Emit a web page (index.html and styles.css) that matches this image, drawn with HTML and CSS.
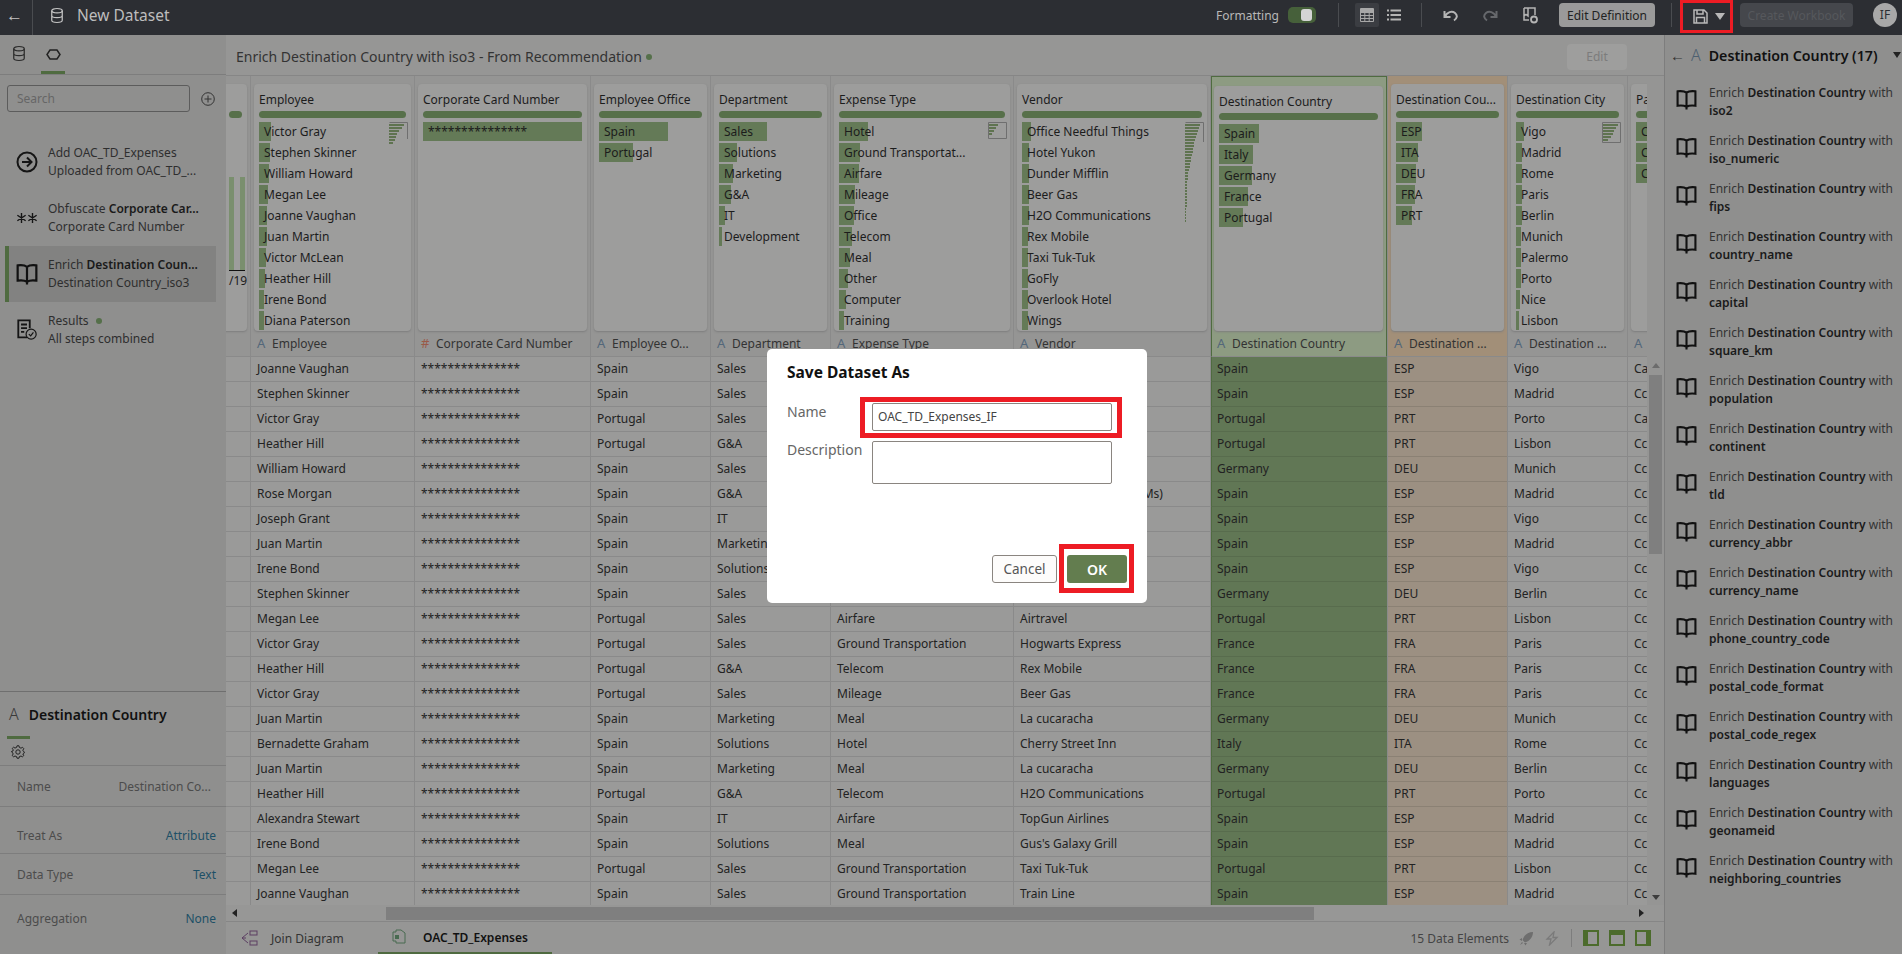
FILE: index.html
```html
<!doctype html>
<html>
<head>
<meta charset="utf-8">
<title>New Dataset</title>
<link rel="stylesheet" href="styles.css">
</head>
<body>
<svg class="defs" width="0" height="0">
	<symbol id="book" viewBox="0 0 20 20"><path d="M10 3.5C8 2 4.5 1.8 1.5 2.2V16C4.5 15.6 8 15.8 10 17M10 3.5C12 2 15.5 1.8 18.5 2.2V16C15.5 15.6 12 15.8 10 17M10 3.5V19.5" fill="none" stroke="currentColor" stroke-width="2"/></symbol>
	<symbol id="db" viewBox="0 0 16 18"><ellipse cx="8" cy="3.5" rx="6" ry="2.5" fill="none" stroke="currentColor" stroke-width="1.4"/><path d="M2 3.5V14.5C2 16 4.7 17 8 17S14 16 14 14.5V3.5M2 9C2 10.5 4.7 11.5 8 11.5S14 10.5 14 9" fill="none" stroke="currentColor" stroke-width="1.4"/></symbol>
</svg>

<div class="topbar">
	<div class="back">&#8592;</div>
	<svg class="top-db"><use href="#db"/></svg>
	<div class="top-title">New Dataset</div>
	<div class="top-right">
		<span class="fmt">Formatting</span>
		<span class="toggle"><i></i></span>
		<span class="sep sep1"></span>
		<span class="view-btn">
			<svg width="14" height="14" viewBox="0 0 14 14"><path d="M.5.5H13.5V13.5H.5ZM.5 4.5H13.5M.5 7.5H13.5M.5 10.5H13.5M4.8 4.5V13.5M9.2 4.5V13.5" fill="none" stroke="#a8a8a8"/><rect x="1" y="1" width="12" height="3" fill="#a8a8a8"/></svg>
		</span>
		<svg class="list-ico" width="14" height="12" viewBox="0 0 14 12"><path d="M0 1.5H2M3.5 1.5H14M0 6H2M3.5 6H14M0 10.5H2M3.5 10.5H14" stroke="#b4b4b4" stroke-width="2"/></svg>
		<span class="sep sep2"></span>
		<svg class="undo" width="15" height="14" viewBox="0 0 15 14"><path d="M1.5 3V9H7.5M2 8.5C4 4 9 2.5 12 5S14 10.500 11 12.500" fill="none" stroke="#b4b4b4" stroke-width="2"/></svg>
		<svg class="redo" width="15" height="14" viewBox="0 0 15 14"><path d="M13.500 3V9H7.500M13 8.500C11 4 6 2.500 3 5S1 10.500 4 12.500" fill="none" stroke="#66686c" stroke-width="2"/></svg>
		<svg class="recipe" width="15" height="17" viewBox="0 0 15 17"><path d="M1 1H12V8M1 1V13H6M5 1V9L3 7.500L1 9" fill="none" stroke="#b4b4b4" stroke-width="1.500"/><circle cx="11" cy="12.500" r="3" fill="none" stroke="#b4b4b4" stroke-width="1.800"/></svg>
		<button class="edit-def" type="button">Edit Definition</button>
		<span class="sep sep3"></span>
		<div class="save-box">
			<svg width="15" height="15" viewBox="0 0 15 15"><path d="M1 1H11L14 4V14H1ZM4 1V5H10V1M3.500 14V8.500H11.500V14" fill="none" stroke="#b8b8b8" stroke-width="1.500"/></svg>
			<span class="caret"></span>
		</div>
		<button class="create-wb" type="button">Create Workbook</button>
		<span class="avatar">IF</span>
	</div>
</div>

<div class="main">
	<div class="left">
		<div class="left-tabs">
			<svg class="ltab"><use href="#db"/></svg>
			<span class="ltab-on"><svg width="15" height="11" viewBox="0 0 15 11"><path d="M4 1H11L14 5.500L11 10H4L1 5.500Z" fill="none" stroke="#222" stroke-width="1.500"/></svg></span>
		</div>
		<div class="search-row">
			<div class="search">Search</div>
			<svg width="14" height="14" viewBox="0 0 14 14"><circle cx="7" cy="7" r="6.300" fill="none" stroke="#333"/><path d="M7 3.500V10.500M3.500 7H10.500" stroke="#333"/></svg>
		</div>
		<div class="steps">
			<div class="step">
				<svg class="step-ico" viewBox="0 0 22 22"><circle cx="11" cy="11" r="9.500" fill="none" stroke="#151515" stroke-width="2"/><path d="M6 11H15M11 6.500L15.500 11L11 15.500" fill="none" stroke="#151515" stroke-width="2"/></svg>
				<div class="step-txt"><div>Add OAC_TD_Expenses</div><div>Uploaded from OAC_TD_...</div></div>
			</div>
			<div class="step">
				<svg class="step-ico" viewBox="0 0 24 22"><path d="M6 5.500V16.500M1.500 8L10.500 14M10.500 8L1.500 14M18 5.500V16.500M13.500 8L22.500 14M22.500 8L13.500 14" stroke="#151515" stroke-width="1.500"/></svg>
				<div class="step-txt"><div>Obfuscate <b>Corporate Car...</b></div><div>Corporate Card Number</div></div>
			</div>
			<div class="step sel">
				<svg class="step-ico"><use href="#book"/></svg>
				<div class="step-txt"><div>Enrich <b>Destination Coun...</b></div><div>Destination Country_iso3</div></div>
			</div>
			<div class="step">
				<svg class="step-ico" viewBox="0 0 22 24"><path d="M11 20H1.500V1.500H14V10M4.500 6H11M4.500 10H11M4.500 14H8" fill="none" stroke="#151515" stroke-width="2"/><circle cx="15.500" cy="16.500" r="5.500" fill="none" stroke="#151515" stroke-width="1.300"/><path d="M13 16.500L15 18.500L18 14.500" fill="none" stroke="#151515" stroke-width="1.300"/></svg>
				<div class="step-txt"><div>Results <i class="dot"></i></div><div>All steps combined</div></div>
			</div>
		</div>
		<div class="props">
			<div class="props-head"><span class="a-big">A</span><b>Destination Country</b></div>
			<div class="props-tab"><i></i>
				<svg width="14" height="14" viewBox="0 0 14 14"><circle cx="7" cy="7" r="2.200" fill="none" stroke="#222"/><path d="M6 .8H8L8.400 2.500L10 3.200L11.500 2.300L12.800 3.700L11.800 5.200L12.500 6.500L13.500 7L12.500 8.800L11.800 9L12.800 10.500L11.400 11.800L10 11L8.400 11.600L8 13.200H6L5.600 11.600L4 11L2.600 11.800L1.200 10.500L2.200 9L1.500 7.500L.5 7V6.500L2 6L2.200 4.800L1.200 3.500L2.600 2.200L4 3.100L5.600 2.400Z" fill="none" stroke="#222"/></svg>
			</div>
			<div class="prop h41"><span>Name</span><span class="pv-grey">Destination Co...</span></div>
			<div class="prop h47"><span>Treat As</span><span class="pv">Attribute</span></div>
			<div class="prop h41"><span>Data Type</span><span class="pv">Text</span></div>
			<div class="prop last"><span>Aggregation</span><span class="pv">None</span></div>
		</div>
	</div>

	<div class="center">
		<div class="subhead">
			<span class="subtitle">Enrich Destination Country with iso3 - From Recommendation</span><i class="dot"></i>
			<button class="edit-btn" type="button">Edit</button>
		</div>
		<div class="sheet">
			<div class="cols">
				<div class="col w-date">
					<div class="prof"><div class="card">
						<div class="card-name">&nbsp;</div><div class="qual"></div>
						<div class="mini-bars"><i></i><i></i></div>
						<div class="date-lbl">/19</div>
					</div></div>
					<div class="head"></div>
					<div class="cell"></div><div class="cell"></div><div class="cell"></div><div class="cell"></div><div class="cell"></div><div class="cell"></div><div class="cell"></div><div class="cell"></div><div class="cell"></div><div class="cell"></div><div class="cell"></div><div class="cell"></div><div class="cell"></div><div class="cell"></div><div class="cell"></div><div class="cell"></div><div class="cell"></div><div class="cell"></div><div class="cell"></div><div class="cell"></div><div class="cell"></div><div class="cell"></div>
				</div>

				<div class="col w-emp">
					<div class="prof"><div class="card">
						<div class="card-name">Employee</div><div class="qual"></div>
						<svg class="spark" width="19" height="23" viewBox="0 0 19 23"><path d="M.5.500H18.500V17" fill="none" stroke="#6f6f6f"/><path d="M0 3H15M0 6H13M0 9H10M0 12H8M0 15H7M0 18H6M0 21H4" stroke="#5f7350" stroke-width="2"/></svg>
						<div class="v"><i style="width:12px"></i>Victor Gray</div>
						<div class="v"><i style="width:11px"></i>Stephen Skinner</div>
						<div class="v"><i style="width:10px"></i>William Howard</div>
						<div class="v"><i style="width:9px"></i>Megan Lee</div>
						<div class="v"><i style="width:8px"></i>Joanne Vaughan</div>
						<div class="v"><i style="width:8px"></i>Juan Martin</div>
						<div class="v"><i style="width:7px"></i>Victor McLean</div>
						<div class="v"><i style="width:6px"></i>Heather Hill</div>
						<div class="v"><i style="width:5px"></i>Irene Bond</div>
						<div class="v"><i style="width:5px"></i>Diana Paterson</div>
					</div></div>
					<div class="head"><span class="a">A</span>Employee</div>
					<div class="cell">Joanne Vaughan</div><div class="cell">Stephen Skinner</div><div class="cell">Victor Gray</div><div class="cell">Heather Hill</div><div class="cell">William Howard</div><div class="cell">Rose Morgan</div><div class="cell">Joseph Grant</div><div class="cell">Juan Martin</div><div class="cell">Irene Bond</div><div class="cell">Stephen Skinner</div><div class="cell">Megan Lee</div><div class="cell">Victor Gray</div><div class="cell">Heather Hill</div><div class="cell">Victor Gray</div><div class="cell">Juan Martin</div><div class="cell">Bernadette Graham</div><div class="cell">Juan Martin</div><div class="cell">Heather Hill</div><div class="cell">Alexandra Stewart</div><div class="cell">Irene Bond</div><div class="cell">Megan Lee</div><div class="cell">Joanne Vaughan</div>
				</div>

				<div class="col w-card">
					<div class="prof"><div class="card">
						<div class="card-name">Corporate Card Number</div><div class="qual"></div>
						<div class="v"><i style="width:159px"></i>***************</div>
					</div></div>
					<div class="head"><span class="a num">#</span>Corporate Card Number</div>
					<div class="cell">***************</div><div class="cell">***************</div><div class="cell">***************</div><div class="cell">***************</div><div class="cell">***************</div><div class="cell">***************</div><div class="cell">***************</div><div class="cell">***************</div><div class="cell">***************</div><div class="cell">***************</div><div class="cell">***************</div><div class="cell">***************</div><div class="cell">***************</div><div class="cell">***************</div><div class="cell">***************</div><div class="cell">***************</div><div class="cell">***************</div><div class="cell">***************</div><div class="cell">***************</div><div class="cell">***************</div><div class="cell">***************</div><div class="cell">***************</div>
				</div>

				<div class="col w-office">
					<div class="prof"><div class="card">
						<div class="card-name">Employee Office</div><div class="qual"></div>
						<div class="v"><i style="width:69px"></i>Spain</div>
						<div class="v"><i style="width:34px"></i>Portugal</div>
					</div></div>
					<div class="head"><span class="a">A</span>Employee O...</div>
					<div class="cell">Spain</div><div class="cell">Spain</div><div class="cell">Portugal</div><div class="cell">Portugal</div><div class="cell">Spain</div><div class="cell">Spain</div><div class="cell">Spain</div><div class="cell">Spain</div><div class="cell">Spain</div><div class="cell">Spain</div><div class="cell">Portugal</div><div class="cell">Portugal</div><div class="cell">Portugal</div><div class="cell">Portugal</div><div class="cell">Spain</div><div class="cell">Spain</div><div class="cell">Spain</div><div class="cell">Portugal</div><div class="cell">Spain</div><div class="cell">Spain</div><div class="cell">Portugal</div><div class="cell">Spain</div>
				</div>

				<div class="col w-dept">
					<div class="prof"><div class="card">
						<div class="card-name">Department</div><div class="qual"></div>
						<div class="v"><i style="width:48px"></i>Sales</div>
						<div class="v"><i style="width:18px"></i>Solutions</div>
						<div class="v"><i style="width:14px"></i>Marketing</div>
						<div class="v"><i style="width:12px"></i>G&amp;A</div>
						<div class="v"><i style="width:6px"></i>IT</div>
						<div class="v"><i style="width:3px"></i>Development</div>
					</div></div>
					<div class="head"><span class="a">A</span>Department</div>
					<div class="cell">Sales</div><div class="cell">Sales</div><div class="cell">Sales</div><div class="cell">G&amp;A</div><div class="cell">Sales</div><div class="cell">G&amp;A</div><div class="cell">IT</div><div class="cell">Marketing</div><div class="cell">Solutions</div><div class="cell">Sales</div><div class="cell">Sales</div><div class="cell">Sales</div><div class="cell">G&amp;A</div><div class="cell">Sales</div><div class="cell">Marketing</div><div class="cell">Solutions</div><div class="cell">Marketing</div><div class="cell">G&amp;A</div><div class="cell">IT</div><div class="cell">Solutions</div><div class="cell">Sales</div><div class="cell">Sales</div>
				</div>

				<div class="col w-type">
					<div class="prof"><div class="card">
						<div class="card-name">Expense Type</div><div class="qual"></div>
						<svg class="spark" width="19" height="17" viewBox="0 0 19 17"><path d="M.5.500H18.500V16.500H.5Z" fill="none" stroke="#6f6f6f"/><path d="M1 3H10M1 6H8M1 9H6M1 12H4" stroke="#5f7350" stroke-width="2"/></svg>
						<div class="v"><i style="width:29px"></i>Hotel</div>
						<div class="v"><i style="width:21px"></i>Ground Transportat...</div>
						<div class="v"><i style="width:20px"></i>Airfare</div>
						<div class="v"><i style="width:16px"></i>Mileage</div>
						<div class="v"><i style="width:15px"></i>Office</div>
						<div class="v"><i style="width:13px"></i>Telecom</div>
						<div class="v"><i style="width:11px"></i>Meal</div>
						<div class="v"><i style="width:9px"></i>Other</div>
						<div class="v"><i style="width:7px"></i>Computer</div>
						<div class="v"><i style="width:5px"></i>Training</div>
					</div></div>
					<div class="head"><span class="a">A</span>Expense Type</div>
					<div class="cell">Airfare</div><div class="cell">Hotel</div><div class="cell">Meal</div><div class="cell">Telecom</div><div class="cell">Hotel</div><div class="cell">Office</div><div class="cell">Computer</div><div class="cell">Meal</div><div class="cell">Other</div><div class="cell">Mileage</div><div class="cell">Airfare</div><div class="cell">Ground Transportation</div><div class="cell">Telecom</div><div class="cell">Mileage</div><div class="cell">Meal</div><div class="cell">Hotel</div><div class="cell">Meal</div><div class="cell">Telecom</div><div class="cell">Airfare</div><div class="cell">Meal</div><div class="cell">Ground Transportation</div><div class="cell">Ground Transportation</div>
				</div>

				<div class="col w-vendor">
					<div class="prof"><div class="card">
						<div class="card-name">Vendor</div><div class="qual"></div>
						<svg class="spark tall" width="19" height="102" viewBox="0 0 19 102"><path d="M.5.500H18.500V20" fill="none" stroke="#6f6f6f"/><path d="M0 3H15M0 6H14M0 9H13M0 12H12M0 15H11M0 18H10M0 21H9M0 24H9M0 27H8M0 30H8M0 33H7M0 36H6M0 39H6M0 42H5M0 45H5M0 48H4M0 51H3M0 54H3M0 57H3M0 60H2M0 63H2M0 66H2M0 69H2M0 72H2M0 75H2M0 78H2M0 81H2M0 84H2M0 87H1M0 90H1M0 93H1M0 96H1M0 99H1" stroke="#5f7350" stroke-width="2"/></svg>
						<div class="v"><i style="width:9px"></i>Office Needful Things</div>
						<div class="v"><i style="width:7px"></i>Hotel Yukon</div>
						<div class="v"><i style="width:7px"></i>Dunder Mifflin</div>
						<div class="v"><i style="width:7px"></i>Beer Gas</div>
						<div class="v"><i style="width:7px"></i>H2O Communications</div>
						<div class="v"><i style="width:6px"></i>Rex Mobile</div>
						<div class="v"><i style="width:6px"></i>Taxi Tuk-Tuk</div>
						<div class="v"><i style="width:6px"></i>GoFly</div>
						<div class="v"><i style="width:6px"></i>Overlook Hotel</div>
						<div class="v"><i style="width:6px"></i>Wings</div>
					</div></div>
					<div class="head"><span class="a">A</span>Vendor</div>
					<div class="cell">GoFly</div><div class="cell">Hotel Yukon</div><div class="cell">Wings</div><div class="cell">Rex Mobile</div><div class="cell">Hotel Yukon</div><div class="cell">Overlook Hotel Suite (Ms)</div><div class="cell">Office Needful Things</div><div class="cell">Beer Gas</div><div class="cell">Overlook Hotel</div><div class="cell">Beer Gas</div><div class="cell">Airtravel</div><div class="cell">Hogwarts Express</div><div class="cell">Rex Mobile</div><div class="cell">Beer Gas</div><div class="cell">La cucaracha</div><div class="cell">Cherry Street Inn</div><div class="cell">La cucaracha</div><div class="cell">H2O Communications</div><div class="cell">TopGun Airlines</div><div class="cell">Gus's Galaxy Grill</div><div class="cell">Taxi Tuk-Tuk</div><div class="cell">Train Line</div>
				</div>

				<div class="col w-dest picked">
					<div class="prof"><div class="card">
						<div class="card-name">Destination Country</div><div class="qual"></div>
						<div class="v"><i style="width:40px"></i>Spain</div>
						<div class="v"><i style="width:34px"></i>Italy</div>
						<div class="v"><i style="width:33px"></i>Germany</div>
						<div class="v"><i style="width:29px"></i>France</div>
						<div class="v"><i style="width:24px"></i>Portugal</div>
					</div></div>
					<div class="head"><span class="a">A</span>Destination Country</div>
					<div class="cell">Spain</div><div class="cell">Spain</div><div class="cell">Portugal</div><div class="cell">Portugal</div><div class="cell">Germany</div><div class="cell">Spain</div><div class="cell">Spain</div><div class="cell">Spain</div><div class="cell">Spain</div><div class="cell">Germany</div><div class="cell">Portugal</div><div class="cell">France</div><div class="cell">France</div><div class="cell">France</div><div class="cell">Germany</div><div class="cell">Italy</div><div class="cell">Germany</div><div class="cell">Portugal</div><div class="cell">Spain</div><div class="cell">Spain</div><div class="cell">Portugal</div><div class="cell">Spain</div>
				</div>

				<div class="col w-iso added">
					<div class="prof"><div class="card">
						<div class="card-name">Destination Cou...</div><div class="qual"></div>
						<div class="v"><i style="width:26px"></i>ESP</div>
						<div class="v"><i style="width:22px"></i>ITA</div>
						<div class="v"><i style="width:20px"></i>DEU</div>
						<div class="v"><i style="width:19px"></i>FRA</div>
						<div class="v"><i style="width:16px"></i>PRT</div>
					</div></div>
					<div class="head"><span class="a">A</span>Destination ...</div>
					<div class="cell">ESP</div><div class="cell">ESP</div><div class="cell">PRT</div><div class="cell">PRT</div><div class="cell">DEU</div><div class="cell">ESP</div><div class="cell">ESP</div><div class="cell">ESP</div><div class="cell">ESP</div><div class="cell">DEU</div><div class="cell">PRT</div><div class="cell">FRA</div><div class="cell">FRA</div><div class="cell">FRA</div><div class="cell">DEU</div><div class="cell">ITA</div><div class="cell">DEU</div><div class="cell">PRT</div><div class="cell">ESP</div><div class="cell">ESP</div><div class="cell">PRT</div><div class="cell">ESP</div>
				</div>

				<div class="col w-city">
					<div class="prof"><div class="card">
						<div class="card-name">Destination City</div><div class="qual"></div>
						<svg class="spark" width="19" height="21" viewBox="0 0 19 21"><path d="M.5.500H18.500V20.500H.5Z" fill="none" stroke="#6f6f6f"/><path d="M1 3H16M1 6H14M1 9H12M1 12H11M1 15H9M1 18H6" stroke="#5f7350" stroke-width="2"/></svg>
						<div class="v"><i style="width:8px"></i>Vigo</div>
						<div class="v"><i style="width:6px"></i>Madrid</div>
						<div class="v"><i style="width:6px"></i>Rome</div>
						<div class="v"><i style="width:6px"></i>Paris</div>
						<div class="v"><i style="width:6px"></i>Berlin</div>
						<div class="v"><i style="width:5px"></i>Munich</div>
						<div class="v"><i style="width:5px"></i>Palermo</div>
						<div class="v"><i style="width:5px"></i>Porto</div>
						<div class="v"><i style="width:4px"></i>Nice</div>
						<div class="v"><i style="width:3px"></i>Lisbon</div>
					</div></div>
					<div class="head"><span class="a">A</span>Destination ...</div>
					<div class="cell">Vigo</div><div class="cell">Madrid</div><div class="cell">Porto</div><div class="cell">Lisbon</div><div class="cell">Munich</div><div class="cell">Madrid</div><div class="cell">Vigo</div><div class="cell">Madrid</div><div class="cell">Vigo</div><div class="cell">Berlin</div><div class="cell">Lisbon</div><div class="cell">Paris</div><div class="cell">Paris</div><div class="cell">Paris</div><div class="cell">Munich</div><div class="cell">Rome</div><div class="cell">Berlin</div><div class="cell">Porto</div><div class="cell">Madrid</div><div class="cell">Madrid</div><div class="cell">Lisbon</div><div class="cell">Madrid</div>
				</div>

				<div class="col w-last">
					<div class="prof"><div class="card">
						<div class="card-name">Pa</div><div class="qual"></div>
						<div class="v"><i style="width:60px"></i>Ca</div>
						<div class="v"><i style="width:60px"></i>Ca</div>
						<div class="v"><i style="width:60px"></i>Ca</div>
					</div></div>
					<div class="head"><span class="a">A</span></div>
					<div class="cell">Ca</div><div class="cell">Cc</div><div class="cell">Ca</div><div class="cell">Cc</div><div class="cell">Cc</div><div class="cell">Cc</div><div class="cell">Cc</div><div class="cell">Cc</div><div class="cell">Cc</div><div class="cell">Cc</div><div class="cell">Cc</div><div class="cell">Cc</div><div class="cell">Cc</div><div class="cell">Cc</div><div class="cell">Cc</div><div class="cell">Cc</div><div class="cell">Cc</div><div class="cell">Cc</div><div class="cell">Cc</div><div class="cell">Cc</div><div class="cell">Cc</div><div class="cell">Cc</div>
				</div>
			</div>
			<div class="vscroll">
				<div class="vtop"></div>
				<span class="arr-up"></span>
				<div class="vthumb"></div>
				<span class="arr-down"></span>
			</div>
		</div>
		<div class="hscroll"><span class="arr-left"></span><div class="hthumb"></div><span class="arr-right"></span></div>
		<div class="tabs">
			<div class="tab join">
				<svg width="17" height="16" viewBox="0 0 17 16"><path d="M1 8L7 3M1 8L7 13M1 8H5" fill="none" stroke="#5c3f63"/><rect x="9" y="1" width="7" height="4" fill="none" stroke="#5c3f63"/><rect x="9" y="11" width="7" height="4" fill="none" stroke="#5c3f63"/></svg>
				<span>Join Diagram</span>
			</div>
			<div class="tab on">
				<svg width="14" height="16" viewBox="0 0 14 16"><path d="M2 3H4V1H9L13 4V14H4V12H1V3Z" fill="none" stroke="#486a50"/><rect x="3" y="6" width="4" height="4" fill="#486a50"/></svg>
				<span>OAC_TD_Expenses</span>
			</div>
			<div class="tab-right">
				<span class="count">15 Data Elements</span>
				<svg width="15" height="15" viewBox="0 0 15 15"><path d="M14 1C9 1 5 4 3.500 9L6 11.500C11 10 14 6 14 1ZM3 7L0.500 8.500L3 10ZM8 12L6.500 14.500L5 12ZM3 11L1 14L4 12Z" fill="#6e6e6e"/></svg>
				<svg class="bolt" width="14" height="15" viewBox="0 0 14 15"><path d="M9 1L2 8H6L4.500 14L12 6.500H8Z" fill="none" stroke="#7a7a7a" stroke-width="1.300"/></svg>
				<span class="sep-b"></span>
				<svg class="pane" width="16" height="16" viewBox="0 0 16 16"><rect x="1" y="1" width="14" height="14" fill="none" stroke="#4c6b2c" stroke-width="2"/><rect x="1" y="1" width="4" height="14" fill="#4c6b2c"/></svg>
				<svg class="pane" width="16" height="16" viewBox="0 0 16 16"><rect x="1" y="1" width="14" height="14" fill="none" stroke="#4c6b2c" stroke-width="2"/><rect x="1" y="1" width="14" height="4" fill="#4c6b2c"/></svg>
				<svg class="pane" width="16" height="16" viewBox="0 0 16 16"><rect x="1" y="1" width="14" height="14" fill="none" stroke="#4c6b2c" stroke-width="2"/><rect x="11" y="1" width="4" height="14" fill="#4c6b2c"/></svg>
			</div>
		</div>
	</div>

	<div class="right">
		<div class="right-head">
			<span class="r-back">&#8592;</span><span class="a-big">A</span><b>Destination Country (17)</b><span class="r-caret"></span>
		</div>
		<div class="rec"><svg><use href="#book"/></svg><div>Enrich <b>Destination Country</b> with<br><b>iso2</b></div></div>
		<div class="rec"><svg><use href="#book"/></svg><div>Enrich <b>Destination Country</b> with<br><b>iso_numeric</b></div></div>
		<div class="rec"><svg><use href="#book"/></svg><div>Enrich <b>Destination Country</b> with<br><b>fips</b></div></div>
		<div class="rec"><svg><use href="#book"/></svg><div>Enrich <b>Destination Country</b> with<br><b>country_name</b></div></div>
		<div class="rec"><svg><use href="#book"/></svg><div>Enrich <b>Destination Country</b> with<br><b>capital</b></div></div>
		<div class="rec"><svg><use href="#book"/></svg><div>Enrich <b>Destination Country</b> with<br><b>square_km</b></div></div>
		<div class="rec"><svg><use href="#book"/></svg><div>Enrich <b>Destination Country</b> with<br><b>population</b></div></div>
		<div class="rec"><svg><use href="#book"/></svg><div>Enrich <b>Destination Country</b> with<br><b>continent</b></div></div>
		<div class="rec"><svg><use href="#book"/></svg><div>Enrich <b>Destination Country</b> with<br><b>tld</b></div></div>
		<div class="rec"><svg><use href="#book"/></svg><div>Enrich <b>Destination Country</b> with<br><b>currency_abbr</b></div></div>
		<div class="rec"><svg><use href="#book"/></svg><div>Enrich <b>Destination Country</b> with<br><b>currency_name</b></div></div>
		<div class="rec"><svg><use href="#book"/></svg><div>Enrich <b>Destination Country</b> with<br><b>phone_country_code</b></div></div>
		<div class="rec"><svg><use href="#book"/></svg><div>Enrich <b>Destination Country</b> with<br><b>postal_code_format</b></div></div>
		<div class="rec"><svg><use href="#book"/></svg><div>Enrich <b>Destination Country</b> with<br><b>postal_code_regex</b></div></div>
		<div class="rec"><svg><use href="#book"/></svg><div>Enrich <b>Destination Country</b> with<br><b>languages</b></div></div>
		<div class="rec"><svg><use href="#book"/></svg><div>Enrich <b>Destination Country</b> with<br><b>geonameid</b></div></div>
		<div class="rec"><svg><use href="#book"/></svg><div>Enrich <b>Destination Country</b> with<br><b>neighboring_countries</b></div></div>
	</div>
</div>

<div class="dialog">
	<div class="dlg-title">Save Dataset As</div>
	<div class="dlg-row">
		<label class="dlg-label">Name</label>
		<div class="dlg-field"><div class="dlg-input">OAC_TD_Expenses_IF</div><span class="mark mark-name"></span></div>
	</div>
	<div class="dlg-row">
		<label class="dlg-label">Description</label>
		<div class="dlg-field"><div class="dlg-input dlg-area"></div></div>
	</div>
	<div class="dlg-foot">
		<button class="btn-cancel" type="button">Cancel</button>
		<div class="dlg-field"><button class="btn-ok" type="button">OK</button><span class="mark mark-ok"></span></div>
	</div>
</div>
</body>
</html>
```

FILE: styles.css
```css
*{
	margin: 0;
	padding: 0;
	box-sizing: border-box;
}
html, body{
	height: 100%;
	overflow: hidden;
}
body{
	display: flex;
	flex-direction: column;
	font-family: "Noto Sans", "Liberation Sans", sans-serif;
	font-size: 12px;
	color: #222;
	background: #999;
}
.defs{
	position: absolute;
}
.dot{
	display: inline-block;
	width: 6px;
	height: 6px;
	margin-left: 4px;
	border-radius: 50%;
	background: #55704a;
	vertical-align: 1px;
}

/* top bar */
.topbar{
	height: 35px;
	flex: none;
	display: flex;
	align-items: center;
	padding-bottom: 5px;
	background: #2c2e33;
	color: #c4c4c4;
}
.back{
	width: 33px;
	height: 35px;
	align-self: flex-start;
	border-right: 1px solid #4a4c50;
	padding-left: 6px;
	font-size: 17px;
	line-height: 30px;
}
.top-db{
	width: 14px;
	height: 17px;
	margin-left: 17px;
	color: #c4c4c4;
}
.top-title{
	margin-left: 13px;
	font-size: 15.5px;
	color: #bdbdbd;
}
.top-right{
	margin-left: auto;
	height: 30px;
	display: flex;
	align-items: center;
}
.fmt{
	font-size: 12px;
	color: #b8b8b8;
}
.toggle{
	width: 28px;
	height: 16px;
	margin-left: 9px;
	border-radius: 5px;
	background: #46603a;
	display: flex;
	justify-content: flex-end;
	padding: 2px 4px;
}
.toggle i{
	width: 11px;
	height: 12px;
	border-radius: 3px;
	background: #d4d4d4;
}
.sep{
	width: 1px;
	height: 24px;
	background: #4a4c50;
}
.sep1{
	margin-left: 22px;
}
.view-btn{
	width: 24px;
	height: 24px;
	margin-left: 16px;
	background: #3b3d42;
	border-radius: 2px;
	display: flex;
	align-items: center;
	justify-content: center;
}
.list-ico{
	margin-left: 8px;
}
.sep2{
	margin-left: 20px;
}
.undo{
	margin-left: 21px;
}
.redo{
	margin-left: 25px;
}
.recipe{
	margin-left: 25px;
}
.edit-def{
	width: 96px;
	height: 24px;
	margin-left: 21px;
	border: 0;
	border-radius: 4px;
	background: #9a9a9a;
	color: #222;
	font: 12px "Noto Sans", sans-serif;
}
.sep3{
	margin-left: 16px;
}
.save-box{
	width: 53px;
	height: 33px;
	align-self: flex-start;
	margin-left: 8px;
	border: 3px solid #ed1c24;
	display: flex;
	align-items: center;
	padding-left: 10px;
	gap: 7px;
}
.caret{
	border-left: 5px solid transparent;
	border-right: 5px solid transparent;
	border-top: 7px solid #b8b8b8;
}
.create-wb{
	width: 113px;
	height: 24px;
	margin-left: 7px;
	border: 0;
	border-radius: 4px;
	background: #45474c;
	color: #56585c;
	font: 12px "Noto Sans", sans-serif;
}
.avatar{
	width: 24px;
	height: 24px;
	margin: 0 5px 0 20px;
	border-radius: 50%;
	background: #a8a8a8;
	color: #2c2e33;
	text-align: center;
	line-height: 24px;
}

.main{
	flex: 1;
	display: flex;
	min-height: 0;
}

/* left side */
.left{
	width: 226px;
	flex: none;
	display: flex;
	flex-direction: column;
	background: #8f8f8e;
}
.left-tabs{
	height: 40px;
	flex: none;
	display: flex;
	border-bottom: 1px solid #7d7d7d;
	padding: 7px 0 0 12px;
}
.ltab{
	width: 14px;
	height: 17px;
	margin-top: 3px;
	color: #2a2a2a;
}
.ltab-on{
	width: 24px;
	height: 32px;
	margin-left: 15px;
	border-bottom: 3px solid #4f6b40;
	text-align: center;
	padding-top: 5px;
}
.search-row{
	display: flex;
	align-items: center;
	gap: 11px;
	padding: 10px 0 0 7px;
}
.search{
	width: 183px;
	height: 27px;
	border: 1px solid #5c5c5c;
	border-radius: 3px;
	padding-left: 9px;
	color: #666;
	line-height: 26px;
}
.steps{
	margin-top: 22px;
	padding-left: 5px;
	width: 216px;
}
.step{
	height: 56px;
	display: flex;
	align-items: center;
	border-left: 4px solid transparent;
}
.step.sel{
	background: #828281;
	border-left-color: #4f6b40;
}
.step-ico{
	width: 22px;
	height: 22px;
	flex: none;
	margin-left: 7px;
	color: #111;
}
.step-txt{
	margin-left: 10px;
	line-height: 18px;
	color: #2e2e2e;
	white-space: nowrap;
}
.props{
	margin-top: auto;
	border-top: 1px solid #6f6f6f;
}
.props-head{
	height: 44px;
	display: flex;
	align-items: center;
	padding-left: 9px;
	font-size: 14px;
	color: #111;
}
.a-big{
	font-size: 16px;
	font-weight: 300;
	color: #3a3a3a;
	margin-right: 10px;
}
.props-head b{
	font-weight: 600;
}
.props-tab{
	height: 30px;
	border-bottom: 1px solid #7d7d7d;
	padding-left: 11px;
}
.props-tab i{
	display: block;
	width: 23px;
	height: 3px;
	margin: 0 0 6px -4px;
	background: #4f6b40;
}
.prop{
	display: flex;
	justify-content: space-between;
	padding: 0 10px 0 17px;
	border-bottom: 1px solid #7d7d7d;
	color: #4c4c4c;
	white-space: nowrap;
}
.h41{
	height: 41px;
	align-items: center;
}
.h47{
	height: 47px;
	align-items: flex-end;
	padding-bottom: 9px;
}
.prop.last{
	flex: 1;
	height: 59px;
	border-bottom: 0;
	padding-top: 15px;
}
.pv{
	color: #1d4f66;
}
.pv-grey{
	color: #4c4c4c;
	padding-right: 5px;
}

/* middle */
.center{
	flex: 1;
	min-width: 0;
	display: flex;
	flex-direction: column;
}
.subhead{
	height: 41px;
	flex: none;
	display: flex;
	align-items: center;
	padding: 3px 0 0 10px;
	background: #969695;
	border-bottom: 1px solid #868686;
	font-size: 14px;
	color: #333;
}
.edit-btn{
	width: 60px;
	height: 26px;
	margin-left: auto;
	margin-right: 37px;
	border: 0;
	border-radius: 4px;
	background: #9e9e9d;
	color: #7c7c7c;
	font: 12px "Noto Sans", sans-serif;
}
.sheet{
	height: 829px;
	flex: none;
	display: flex;
}
.cols{
	width: 1421px;
	flex: none;
	display: flex;
	overflow: hidden;
}
.col{
	flex: none;
	display: flex;
	flex-direction: column;
	border-right: 1px solid #8a8a8a;
}
.w-date{ width: 25px; }
.w-emp{ width: 164px; }
.w-card{ width: 176px; }
.w-office{ width: 120px; }
.w-dept{ width: 120px; }
.w-type{ width: 183px; }
.w-vendor{ width: 197px; }
.w-dest{ width: 177px; }
.w-iso{ width: 120px; }
.w-city{ width: 120px; }
.w-last{ width: 60px; border-right: 0; }

.prof{
	height: 254px;
	flex: none;
	padding: 8px 3px 0 3px;
	background: #959594;
}
.card{
	position: relative;
	z-index: 0;
	height: 247px;
	overflow: hidden;
	padding: 0 5px;
	background: #9d9d9c;
	border-radius: 4px;
	box-shadow: 0 1px 2px #7d7d7d;
	white-space: nowrap;
	color: #1c1c1c;
}
.card-name{
	height: 27px;
	line-height: 32px;
}
.qual{
	height: 7px;
	margin-bottom: 4px;
	border-radius: 4px;
	background: #57704a;
}
.v{
	position: relative;
	height: 19px;
	margin-bottom: 2px;
	padding-left: 5px;
	line-height: 20px;
}
.v i{
	position: absolute;
	left: 0;
	top: 0;
	height: 19px;
	background: #647a57;
	z-index: -1;
}
.spark{
	position: absolute;
	right: 3px;
	top: 38px;
	z-index: 2;
}
.mini-bars{
	position: absolute;
	left: 20px;
	top: 93px;
	width: 16px;
	height: 94px;
	display: flex;
	gap: 6px;
	border-bottom: 1px solid #111;
}
.mini-bars i{
	width: 5px;
	flex: none;
	background: #7a8f6e;
}
.date-lbl{
	position: absolute;
	left: 20px;
	top: 188px;
}
.w-date .card{
	margin-left: -20px;
	padding: 0 5px 0 20px;
}
.head{
	height: 27px;
	flex: none;
	display: flex;
	align-items: center;
	padding-left: 6px;
	background: #959594;
	border-bottom: 1px solid #8a8a8a;
	white-space: nowrap;
	color: #333;
}
.a{
	width: 15px;
	flex: none;
	color: #53677a;
	font-size: 13px;
}
.a.num{
	color: #9a5a48;
}
.cell{
	height: 25px;
	flex: none;
	padding-left: 6px;
	line-height: 24px;
	background: #9a9a99;
	border-bottom: 1px solid #8a8a8a;
	white-space: nowrap;
	overflow: hidden;
	color: #222;
}
.picked .prof{
	background: #8d9b82;
	padding: 9px 3px 0 2px;
	border: solid #4f6b40;
	border-width: 1px 1px 0 1px;
}
.picked .card{
	height: 245px;
}
.picked .card-name{
	line-height: 31px;
}
.picked .head{
	background: #8d9b82;
	border-left: 1px solid #4f6b40;
	border-right: 1px solid #4f6b40;
	padding-left: 5px;
}
.picked .cell{
	background: #617755;
	border-bottom-color: #586c4d;
	border-left: 1px solid #4f6b40;
	padding-left: 5px;
}
.added .prof, .added .head{
	background: #a28f78;
}
.added .cell{
	background: #9c9082;
	border-bottom-color: #8b8174;
}

.vscroll{
	width: 17px;
	flex: none;
	display: flex;
	flex-direction: column;
	align-items: center;
	background: #959594;
}
.vtop{
	height: 281px;
	width: 100%;
	flex: none;
}
.vthumb{
	width: 13px;
	height: 179px;
	flex: none;
	margin-top: 7px;
	background: #7f7f7f;
}
.arr-up{
	margin-top: 6px;
	border-left: 4px solid transparent;
	border-right: 4px solid transparent;
	border-bottom: 5px solid #6c6c6c;
}
.arr-down{
	margin-top: auto;
	margin-bottom: 5px;
	border-left: 4px solid transparent;
	border-right: 4px solid transparent;
	border-top: 5px solid #3d3d3d;
}
.hscroll{
	height: 17px;
	flex: none;
	display: flex;
	align-items: center;
	background: #979796;
	border-bottom: 1px solid #868686;
}
.arr-left{
	margin-left: 6px;
	border-top: 4px solid transparent;
	border-bottom: 4px solid transparent;
	border-right: 5px solid #222;
}
.hthumb{
	width: 928px;
	height: 13px;
	margin-left: 149px;
	background: #7f7f7f;
}
.arr-right{
	margin-left: 325px;
	border-top: 4px solid transparent;
	border-bottom: 4px solid transparent;
	border-left: 5px solid #222;
}
.tabs{
	flex: 1;
	display: flex;
	align-items: center;
	background: #969695;
}
.tab{
	display: flex;
	align-items: center;
	height: 100%;
}
.tab span{
	margin-left: 13px;
}
.tab.join{
	padding-left: 15px;
	width: 152px;
	color: #333;
}
.tab.on{
	width: 174px;
	padding-left: 14px;
	border-bottom: 2px solid #4f6b40;
	font-weight: 600;
	color: #111;
}
.tab.on span{
	margin-left: 17px;
}
.tab-right{
	margin-left: auto;
	margin-right: 3px;
	display: flex;
	align-items: center;
}
.count{
	color: #444;
	margin-right: 10px;
}
.bolt{
	margin-left: 11px;
}
.sep-b{
	width: 1px;
	height: 18px;
	margin: 0 11px 0 12px;
	background: #7d7d7d;
}
.pane{
	margin-right: 10px;
}

/* right side */
.right{
	width: 238px;
	flex: none;
	border-left: 1px solid #7d7d7d;
	background: #8f8f8e;
	overflow: hidden;
	white-space: nowrap;
}
.right-head{
	height: 40px;
	display: flex;
	align-items: center;
	padding: 0 0 0 5px;
	font-size: 14.2px;
	color: #111;
}
.right-head b{
	font-weight: 600;
}
.r-back{
	font-size: 15px;
	margin-right: 6px;
	color: #333;
}
.right-head .a-big{
	color: #4d6070;
	margin-right: 8px;
}
.r-caret{
	margin-left: 15px;
	border-left: 4px solid transparent;
	border-right: 4px solid transparent;
	border-top: 6px solid #222;
}
.rec{
	height: 48px;
	display: flex;
	padding-top: 9px;
	line-height: 18px;
	color: #333;
}
.rec svg{
	width: 21px;
	height: 21px;
	flex: none;
	margin: 5px 0 0 11px;
	color: #111;
}
.rec div{
	margin-left: 12px;
}
.rec b{
	color: #1a1a1a;
	font-weight: 600;
}
.step b{
	color: #1a1a1a;
	font-weight: 600;
}

/* dialog */
.dialog{
	position: absolute;
	left: 767px;
	top: 349px;
	width: 380px;
	height: 254px;
	display: flex;
	flex-direction: column;
	padding: 12px 20px 20px;
	background: #fff;
	border-radius: 5px;
	color: #555;
	font-size: 14px;
}
.dlg-title{
	height: 24px;
	line-height: 22px;
	font-size: 15.5px;
	font-weight: 700;
	color: #111;
	margin-bottom: 18px;
}
.dlg-row{
	display: flex;
	margin-bottom: 10px;
}
.dlg-label{
	width: 85px;
	flex: none;
	line-height: 18px;
	color: #666;
}
.dlg-field{
	position: relative;
}
.dlg-input{
	width: 240px;
	height: 28px;
	border: 1px solid #8a8580;
	border-radius: 2px;
	padding-left: 5px;
	line-height: 26px;
	font-size: 12px;
	color: #444;
}
.dlg-area{
	height: 43px;
}
.mark{
	position: absolute;
	border: 5px solid #ed1c24;
	pointer-events: none;
}
.mark-name{
	left: -12px;
	right: -10px;
	top: -6px;
	bottom: -7px;
}
.dlg-foot{
	margin-top: auto;
	display: flex;
	justify-content: flex-end;
	gap: 10px;
}
.btn-cancel{
	width: 65px;
	height: 28px;
	border: 1px solid #8a8580;
	border-radius: 3px;
	background: #fdfcfb;
	color: #555;
	font: 13.5px "Noto Sans", sans-serif;
}
.btn-ok{
	display: block;
	width: 60px;
	height: 28px;
	border: 0;
	border-radius: 3px;
	background: #637d4f;
	color: #fff;
	font: 600 14px "Noto Sans", sans-serif;
}
.mark-ok{
	left: -8px;
	right: -7px;
	top: -11px;
	bottom: -10px;
}
```
